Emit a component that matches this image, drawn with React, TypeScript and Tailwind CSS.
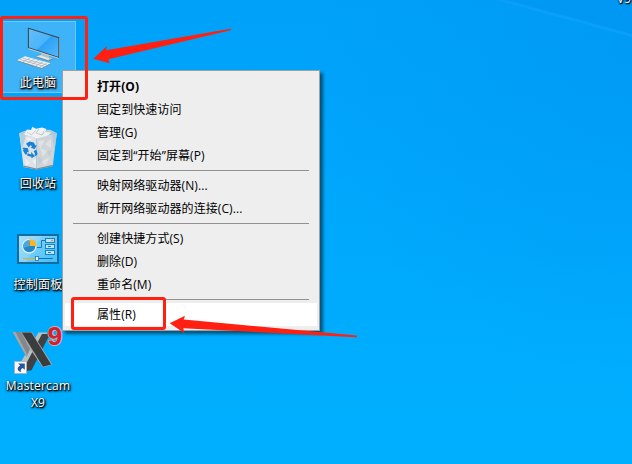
import type { ReactNode } from 'react'
import clsx from 'clsx'

type MenuEntry = { label: string; bold?: boolean; active?: boolean } | 'separator'

const menuEntries: MenuEntry[] = [
  { label: '打开(O)', bold: true },
  { label: '固定到快速访问' },
  { label: '管理(G)' },
  { label: '固定到“开始”屏幕(P)' },
  'separator',
  { label: '映射网络驱动器(N)...' },
  { label: '断开网络驱动器的连接(C)...' },
  'separator',
  { label: '创建快捷方式(S)' },
  { label: '删除(D)' },
  { label: '重命名(M)' },
  'separator',
  { label: '属性(R)', active: true },
]

function ComputerIcon() {
  return (
    <svg className="w-12 h-12 shrink-0 overflow-visible" viewBox="0 0 48 48">
      <defs>
        <linearGradient id="screen" x1="0" y1="0" x2="1" y2="1">
          <stop offset="0" stopColor="#62bffa" />
          <stop offset="0.5" stopColor="#4ab4fa" />
          <stop offset="0.52" stopColor="#2ba2f6" />
          <stop offset="1" stopColor="#55bafb" />
        </linearGradient>
      </defs>
      <path d="M27 27 35 29.6V33l4.5 1.4-4.8 2.4L21.5 32.4l5.5-1.2z" fill="#b3bfc7" />
      <path d="M21.5 32.4l5.5-1.2 8 3-0.3 2.6z" fill="#dde4e8" />
      <path d="M21.5 32.6l13.2 4.3 4.8-2.3" fill="none" stroke="#66737b" strokeWidth="0.7" />
      <path d="M14.4 4.2 44.8 13.6V33.5L14.4 23.8z" fill="url(#screen)" stroke="#3d4a53" strokeWidth="1.1" />
      <path d="M14.4 24.6 44.6 34.3" stroke="#cfdbe2" strokeWidth="0.8" />
      <path d="M45.4 13.8V34" stroke="#93a5b0" strokeWidth="0.7" />
      <path d="M3 36.3 11 32.2 36.8 39.3 27.8 44.2z" fill="#eef1f3" />
      <path d="M3 36.4v.9l24.8 7.7 9-5v-.8l-9 4.9z" fill="#7f8c94" />
      <path
        d="M5.5 35.3 30 42.4M8.2 34 33 41M9 37.8l7.3-3.9M13.4 39.1l7.2-4M17.6 40.4l7.3-4.1M22 41.6l7.3-4M26 42.9l7.2-4"
        stroke="#a4afb6"
        strokeWidth="0.7"
      />
    </svg>
  )
}

function RecycleBinIcon() {
  return (
    <svg className="w-12 h-12 shrink-0 overflow-visible" viewBox="0 0 48 48">
      <path d="M5.2 8 22.5 13 22.5 44.6 9.6 42z" fill="#dfe2e5" />
      <path d="M22.5 13 42.8 8 38.8 41 22.5 44.6z" fill="#cfd4d8" />
      <path d="M5.2 8 12 5.5 36 4.8 42.8 8 22.5 13z" fill="#bccbd6" />
      <path d="M5.2 8 12 10.2 8 25z" fill="#b4cfe0" />
      <path d="M42.8 8 38 10 40.5 26z" fill="#b4cad8" />
      <path d="M10 9.5 13 4.6 17 5 18.3 1.8 22 3.8 28 2.4 32.5 4 31 7 37 7.5 34 10.5 23 13.4z" fill="#f0f1f2" />
      <path d="M13 7l4.5 3 4-4.5M25 4l-3 4 6 2 2-4M30.5 7.5l-3 3" fill="none" stroke="#bcc2c7" strokeWidth="0.8" />
      <path d="M24 16l7-1-5 9zM26 23l7 3-4 6zM37 14l-6 5 6 4zM28 36l8-4-5 9z" fill="#dee2e5" />
      <path d="M33 27l4-2-1 7zM24 32l5 3-4 5z" fill="#c3c9ce" />
      <path d="M12 12l7 2-5 3zM11.5 34l5 4-5 3zM18 36l4-2v7z" fill="#eceef0" />
      <path d="M9.6 41.2 22.5 44.1 38.8 40.5" fill="none" stroke="#878f95" strokeWidth="1.3" />
      <g fill="#1683d8">
        <path d="M12 18.7 15.3 16.6 19.8 17.4 21.4 20.6 22.8 20.2 20.6 24.2 16.6 22.5 18 21.8 16.7 19.9 14.8 22.6z" />
        <path d="M9.4 22.4 14 23.2 14.8 27.4 13.3 26.8 12.7 29.4 11.3 29.6 8.9 25.6 10 24.7 8.6 24.2z" />
        <path d="M13.6 28.2 17.2 29.4V26.9l3.8 4.4-3.6 2v-1.6l-4.2-1z" />
        <path d="M19.6 26.2 22.4 24.6 23.6 28.9 21.8 31.2 20.6 30.2 21 28.5z" />
      </g>
    </svg>
  )
}

function ControlPanelIcon() {
  return (
    <svg className="w-12 h-12 shrink-0 overflow-visible" viewBox="0 0 48 48">
      <defs>
        <linearGradient id="panel" x1="0" y1="0" x2="1" y2="0.7">
          <stop offset="0" stopColor="#9bdcfb" />
          <stop offset="1" stopColor="#4cc1f8" />
        </linearGradient>
      </defs>
      <rect x="3" y="8" width="42" height="30" fill="#176a9e" />
      <rect x="5" y="10" width="38" height="26" fill="url(#panel)" />
      <path d="M5 10H28L12 36H5z" fill="#fff" opacity="0.13" />
      <circle cx="15.2" cy="20.3" r="7.3" fill="#d9f1fc" />
      <circle cx="15.2" cy="20.3" r="6" fill="#2387cb" />
      <path d="M15.2 20.3V14.3a6 6 0 0 0-5.8 7.6z" fill="#4ba7dd" />
      <path d="M15.6 20V12.9a7 7 0 0 1 7 7.1z" fill="#ffb323" />
      <path d="M23 21.5h4.5v-7H32" fill="none" stroke="#147bbb" strokeWidth="1" />
      <g fill="#b9e6fa" stroke="#1783c3" strokeWidth="1">
        <rect x="31.5" y="12.5" width="9" height="4" />
        <rect x="31.5" y="18.5" width="9" height="4" />
        <rect x="31.5" y="24.5" width="9" height="4" />
      </g>
      <path d="M37 14.5h2.2" stroke="#f6921e" strokeWidth="1.4" />
      <path d="M34 20.5h2.8M34 26.5h2.8" stroke="#1678b8" strokeWidth="1.2" />
      <path d="M9 32.5h13" stroke="#f9a11b" strokeWidth="1" />
      <path d="M24 32.5h14.7" stroke="#1472b3" strokeWidth="1" />
      <rect x="21.5" y="30.5" width="3" height="4" fill="#f2fbff" stroke="#1577b8" strokeWidth="0.8" />
    </svg>
  )
}

function MastercamIcon() {
  return (
    <svg className="w-12 h-12 shrink-0 overflow-visible" viewBox="0 0 48 48">
      <path d="M24.5 5.5 33 5.5 28 24 10 44.4 5 38z" fill="#b9bfc3" />
      <path d="M28 7 36 7 17.5 43.2 10.5 44.2 12 37z" fill="#3f4143" />
      <path d="M-1.3 5 9 5 17 20 12.5 30z" fill="#85888b" />
      <path d="M-1.3 5 1.5 5 13.3 28 12.5 30z" fill="#a3a8ab" />
      <path d="M7.2 4.9 17.8 4.9 38 37 37 38.2 28.8 40.6 14.8 20z" fill="#a5aaad" />
      <path d="M7.8 5.6 17.3 5.6 37.2 37.5 29 39.8z" fill="#3a3c3e" />
      <text
        x="33.6"
        y="18"
        fontSize="25"
        fontWeight="700"
        fontFamily="Liberation Sans"
        fill="#d2202c"
        stroke="#c8b0bd"
        strokeWidth="1.8"
        paintOrder="stroke"
        textLength="14.6"
        lengthAdjust="spacingAndGlyphs"
      >
        9
      </text>
      <rect x="0.5" y="34.5" width="12" height="12" fill="#f8f8f8" stroke="#a9b3ba" strokeWidth="0.9" />
      <path d="M4.2 36.4h6.6v6.4L8.7 40.9C6.9 42 6.4 43.3 6.9 45.2 3 43.7 2.6 40.4 6.2 38.5z" fill="#27569c" />
    </svg>
  )
}

function DesktopItem({ icon, label, selected }: { icon: ReactNode; label: string; selected?: boolean }) {
  return (
    <div
      className={clsx(
        'w-[76px] h-[72px] flex flex-col items-center border pt-[2px]',
        selected
          ? 'border-[#6cc7fb] border-l-transparent bg-[#3eb3f7]'
          : 'border-transparent'
      )}
    >
      {icon}
      <span className="mt-[2px] text-xs leading-[17px] tracking-[0.2px] text-white text-center whitespace-pre [text-shadow:1px_1px_1px_#000,0_1px_2px_#000,1px_1px_3px_#000]">
        {label}
      </span>
    </div>
  )
}

function ContextMenu() {
  return (
    <div className="absolute left-[62px] top-[70px] w-[258px] border border-[#a0a0a0] bg-[#eeeeee] px-[2px] py-1 shadow-[3px_3px_3px_rgba(0,0,0,0.5)]">
      {menuEntries.map((entry, i) =>
        entry === 'separator' ? (
          <div key={i} className="h-[7px] pt-[3px] px-2">
            <div className="h-px bg-[#919191]" />
          </div>
        ) : (
          <div
            key={i}
            className={clsx(
              'h-[23px] flex items-center pl-8 text-xs text-black whitespace-nowrap tracking-[0.08px]',
              entry.bold && 'font-bold',
              entry.active && 'bg-white'
            )}
          >
            {entry.label}
          </div>
        )
      )}
    </div>
  )
}

export default function App() {
  return (
    <div className="relative w-[632px] h-[464px] overflow-hidden bg-linear-to-b from-[#00a1f9] to-[#00b0ff] font-['Open_Sans','Noto_Sans_CJK_SC',sans-serif]">
      {/* Wallpaper light ray */}
      <svg className="absolute inset-0 w-full h-full" viewBox="0 0 632 464">
        <defs>
          <radialGradient id="shade" gradientUnits="userSpaceOnUse" cx="640" cy="40" r="340">
            <stop offset="0" stopColor="#0092f0" stopOpacity="0.5" />
            <stop offset="1" stopColor="#0092f0" stopOpacity="0" />
          </radialGradient>
        </defs>
        <rect width="632" height="464" fill="url(#shade)" />
        <path d="M500 0H632V34z" fill="#008ce8" opacity="0.2" />
        <path d="M498 -1 634 36" stroke="#18a6ff" strokeWidth="3" opacity="0.45" />
      </svg>

      {/* Desktop icons */}
      <div className="relative pt-[21px] flex flex-col gap-[29px]">
        <DesktopItem icon={<ComputerIcon />} label="此电脑" selected />
        <DesktopItem icon={<RecycleBinIcon />} label="回收站" />
        <DesktopItem icon={<ControlPanelIcon />} label="控制面板" />
        <DesktopItem icon={<MastercamIcon />} label={'Mastercam\nX9'} />
      </div>
      <span className="absolute left-[617px] -top-[10px] text-xs leading-[17px] text-white [text-shadow:1px_1px_1px_#000,0_1px_2px_#000]">
        V9
      </span>

      <ContextMenu />

      {/* Red annotations */}
      <div className="absolute left-0 top-4 w-[88px] h-[84px] border-3 border-[#ff2012] rounded-[3px]" />
      <div className="absolute left-[71px] top-[297px] w-[95px] h-[33px] border-3 border-[#ff2012] rounded-[3px]" />
      <svg className="absolute inset-0 w-full h-full" viewBox="0 0 632 464" fill="#ff2012">
        <path d="M93.3 58.7 107 46 106 50.3 230.5 28.8Q232 29.6 230.5 30.3L108.3 59.2 109.7 63.3z" />
        <path d="M169.7 323.3 185 315.7 183.7 319.5 356.5 335.6Q358 336.5 356 337.2L183.3 328.3 184.3 333z" />
      </svg>
    </div>
  )
}
